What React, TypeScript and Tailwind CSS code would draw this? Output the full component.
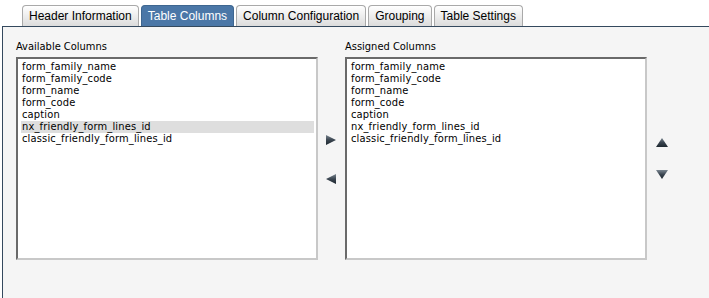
import React from "react";

const items = [
  "form_family_name",
  "form_family_code",
  "form_name",
  "form_code",
  "caption",
  "nx_friendly_form_lines_id",
  "classic_friendly_form_lines_id",
];

const tabs = [
  { label: "Header Information", active: false },
  { label: "Table Columns", active: true },
  { label: "Column Configuration", active: false },
  { label: "Grouping", active: false },
  { label: "Table Settings", active: false },
];

const listFont = { fontFamily: '"DejaVu Sans", Verdana, sans-serif', fontStretch: "condensed" as const };

function ListBox({ highlight }: { highlight?: number }) {
  return (
    <div className="h-[203px] w-[302px] border-2 border-t-[#6a6a6a] border-l-[#6a6a6a] border-b-[#c8c8c8] border-r-[#c8c8c8] bg-white pt-[2px] pl-[3px] pr-[2px]">
      {items.map((it, i) => (
        <div
          key={it}
          className={`h-[12px] pl-[1px] text-[11px] leading-[12px] tracking-[0.17px] text-black whitespace-nowrap ${i === highlight ? "bg-[#dedede]" : ""}`}
          style={listFont}
        >
          {it}
        </div>
      ))}
    </div>
  );
}

function Tri({ dir }: { dir: "right" | "left" | "up" | "down" }) {
  const pts: Record<string, string> = {
    right: "0,0 10,5 0,10",
    left: "10,0 0,5 10,10",
    up: "6,0 12,9 0,9",
    down: "0,0 12,0 6,9",
  };
  const w = dir === "up" || dir === "down" ? 12 : 10;
  const h = dir === "up" || dir === "down" ? 9 : 10;
  const id = `g-${dir}`;
  return (
    <svg width={w} height={h} viewBox={`0 0 ${w} ${h}`} className="block">
      <defs>
        <linearGradient id={id} x1="0" y1="0" x2="0" y2="1">
          <stop offset="0" stopColor="#7a8690" />
          <stop offset="0.5" stopColor="#3a4550" />
          <stop offset="1" stopColor="#1e2830" />
        </linearGradient>
      </defs>
      <polygon points={pts[dir]} fill={`url(#${id})`} />
    </svg>
  );
}

export default function App() {
  return (
    <div className="h-[298px] w-[709px] overflow-hidden bg-white">
      <div className="flex items-end gap-[2px] pl-[22px] pt-[5px] h-[26px]">
        {tabs.map((t) => (
          <div
            key={t.label}
            className={`h-[21px] px-[6px] rounded-t-[4px] border border-b-0 text-[12px] leading-[20px] whitespace-nowrap ${
              t.active
                ? "bg-[#4b77a7] border-[#3e6690] text-white"
                : "bg-gradient-to-b from-white to-[#dcdcdc] border-[#a9a9a9] text-black"
            }`}
            style={{ fontFamily: '"Liberation Sans", Arial, sans-serif' }}
          >
            {t.label}
          </div>
        ))}
      </div>
      <div className="ml-[2px] h-[272px] border-t border-l border-[#34495e] bg-[#f5f5f5] pl-[13px] pt-[13px]">
        <div className="flex">
          <div className="flex flex-col">
            <div className="h-[13px] mb-[4px] text-[11px] leading-[13px] text-black" style={listFont}>
              Available Columns
            </div>
            <ListBox highlight={5} />
          </div>
          <div className="w-[27px] flex flex-col items-start pt-[95px] pl-[8px]">
            <Tri dir="right" />
            <div className="h-[29px]" />
            <Tri dir="left" />
          </div>
          <div className="flex flex-col">
            <div className="h-[13px] mb-[4px] text-[11px] leading-[13px] text-black" style={listFont}>
              Assigned Columns
            </div>
            <ListBox />
          </div>
          <div className="w-[40px] flex flex-col items-start pt-[98px] pl-[9px]">
            <Tri dir="up" />
            <div className="h-[23px]" />
            <Tri dir="down" />
          </div>
        </div>
      </div>
    </div>
  );
}
